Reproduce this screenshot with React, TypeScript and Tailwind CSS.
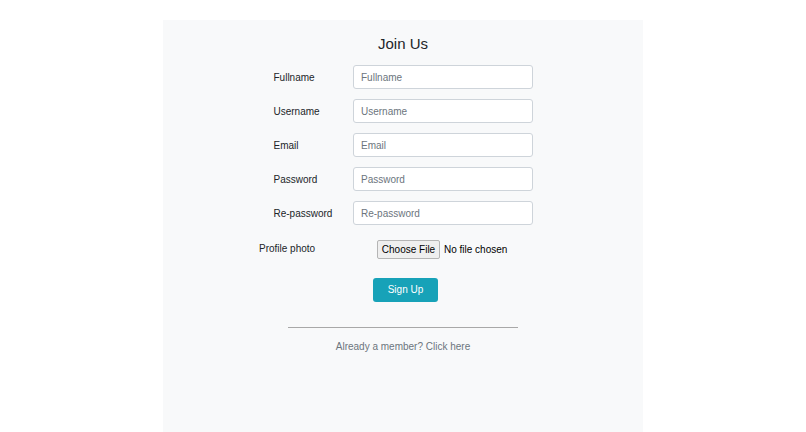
export default function App() {
  const fields = ['Fullname', 'Username', 'Email', 'Password', 'Re-password'];

  return (
    <div className="min-h-screen bg-white font-['Liberation_Sans',Arial,sans-serif] text-[#212529]">
      <div className="mx-auto mt-[20px] h-[412px] w-[480px] bg-[#f8f9fa] pt-[15px]">
        {/* Title */}
        <h4 className="text-center text-[15px] font-medium leading-[18px]">Join Us</h4>

        {/* Text fields */}
        <form className="mt-[12px]">
          <div className="mx-auto flex w-[259px] flex-col gap-[10px]">
            {fields.map((f) => (
              <div key={f} className="flex items-center">
                <label className="w-[79px] text-[10px] leading-[15px]">{f}</label>
                <input
                  type={f.includes('assword') ? 'password' : 'text'}
                  placeholder={f}
                  className="h-[24px] w-[180px] rounded-[3px] border border-[#ced4da] bg-white px-[7.5px] text-[10px] outline-none placeholder:text-[#6c757d]"
                />
              </div>
            ))}
          </div>

          {/* Profile photo */}
          <div className="mt-[15px] flex items-center pl-[96px]">
            <label className="w-[118px] pb-[2px] text-[10px] leading-[15px]">Profile photo</label>
            <div className="flex items-center text-[10px] text-black">
              <span className="flex h-[19px] w-[63px] items-center justify-center rounded-[2px] border border-[#b5b5b5] bg-[#efefef]">
                Choose File
              </span>
              <span className="ml-[4px]">No file chosen</span>
            </div>
          </div>

          {/* Submit */}
          <div className="mt-[17px] pl-[210px]">
            <button
              type="button"
              className="h-[24px] w-[65px] rounded-[3px] bg-[#17a2b8] text-[10px] text-white"
            >
              Sign Up
            </button>
          </div>
        </form>

        <hr className="mx-auto mt-[25px] w-[230px] border-t border-[#a8a8a8]" />
        <p className="mt-[11px] text-center text-[10px] leading-[15px] text-[#6c757d]">
          Already a member? Click here
        </p>
      </div>
    </div>
  );
}
